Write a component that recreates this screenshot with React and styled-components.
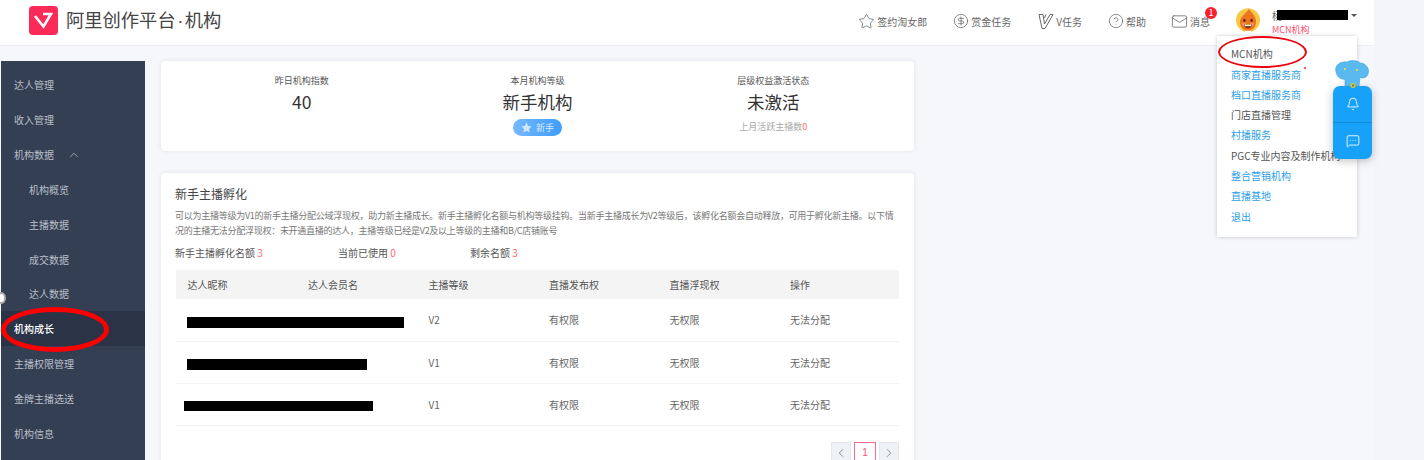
import styled, { createGlobalStyle } from "styled-components";
import { Star, CircleDollarSign, CircleHelp, Mail, Bell, MessageSquareMore, ChevronUp, ChevronLeft, ChevronRight } from "lucide-react";

const menuItems = [
    { label: "达人管理" },
    { label: "收入管理" },
    { label: "机构数据", open: true },
    { label: "机构概览", sub: true },
    { label: "主播数据", sub: true },
    { label: "成交数据", sub: true },
    { label: "达人数据", sub: true },
    { label: "机构成长", active: true },
    { label: "主播权限管理" },
    { label: "金牌主播选送" },
    { label: "机构信息" },
];

const dropItems = [
    { label: "MCN机构" },
    { label: "商家直播服务商", link: true },
    { label: "档口直播服务商", link: true },
    { label: "门店直播管理" },
    { label: "村播服务", link: true },
    { label: "PGC专业内容及制作机构" },
    { label: "整合营销机构", link: true },
    { label: "直播基地", link: true },
    { label: "退出", link: true },
];

const rows = [
    { level: "V2", left: 11, width: 217, top: 18, height: 11 },
    { level: "V1", left: 11, width: 180, top: 17, height: 11 },
    { level: "V1", left: 8, width: 189, top: 17, height: 10 },
];

function Logo(){
    return(
        <svg width="29" height="29" viewBox="0 0 29 29">
            <rect width="29" height="29" rx="4" fill="#fc2a56" />
            <path d="M6 10 L14.5 20.5 L22 8 L14 8" fill="none" stroke="#fff" strokeWidth="2.6" />
        </svg>
    );
}

function VIcon(){
    return(
        <svg width="16" height="17" viewBox="0 0 16 17" fill="none" stroke="#666" strokeWidth="1">
            <path d="M1 1.5 H5 L6.5 11 L12 1.5 H15 L7 15.5 H4 Z" />
            <path d="M8 1.5 L6.5 5" />
        </svg>
    );
}

function AvatarFace(){
    return(
        <svg width="30" height="33" viewBox="0 0 30 33">
            <circle cx="15" cy="15" r="15" fill="#f8c945" />
            <path d="M16 1 C18 5 25 8 25 17 C25 24 20 28 15 28 C10 28 5 24 5 17 C5 10 12 8 16 1 Z" fill="#ee7420" />
            <circle cx="10" cy="20" r="2.4" fill="#f2935a" />
            <circle cx="20" cy="20" r="2.4" fill="#f2935a" />
            <ellipse cx="10.5" cy="15" rx="1.5" ry="2" fill="#5b2507" />
            <ellipse cx="19.5" cy="15" rx="1.5" ry="2" fill="#5b2507" />
            <path d="M10 20.5 H20 Q19 25 15 25 Q11 25 10 20.5 Z" fill="#7a2c0a" />
            <rect x="11" y="20.5" width="8" height="1.8" fill="#fff" />
            <path d="M11 28 H19 L18 33 H12 Z" fill="#fff" />
        </svg>
    );
}

function Elephant(){
    return(
        <svg width="36" height="28" viewBox="0 0 36 28">
            <path d="M2 12 C0 5 7 1 13 2 C17 0 23 0 26 3 C32 3 36 9 34 14 C33 18 28 19 26 17 L25 26 L11 26 L11 19 C7 20 3 17 2 12 Z" fill="#5ab9ee" stroke="#3f9fd8" strokeWidth="0.6" />
            <circle cx="11" cy="9" r="1" fill="#f5e04a" />
            <circle cx="23" cy="10" r="1" fill="#f5e04a" />
            <circle cx="19" cy="25.5" r="2.5" fill="#e2c52a" />
            <circle cx="19" cy="25.5" r="1" fill="#3c6b8a" />
        </svg>
    );
}

function StarBadge(){
    return(
        <svg width="11" height="11" viewBox="0 0 24 24" fill="#cfe6ff">
            <path d="M12 1 L15.5 8.5 L23 9.5 L17.5 15 L19 23 L12 19 L5 23 L6.5 15 L1 9.5 L8.5 8.5 Z" />
        </svg>
    );
}

export default function App(){
    return(
        <>
            <GlobalStyle />
            <Page>
                <Header>
                    <Brand>
                        <Logo />
                        <BrandName>阿里创作平台<BrandDot>·</BrandDot>机构</BrandName>
                    </Brand>
                    <Nav>
                        <NavItem $gap={26}><Star size={17} strokeWidth={1} />签约淘女郎</NavItem>
                        <NavItem $gap={27}><CircleDollarSign size={16} strokeWidth={1} />赏金任务</NavItem>
                        <NavItem $gap={26}><VIcon />V任务</NavItem>
                        <NavItem $gap={25}><CircleHelp size={16} strokeWidth={1} />帮助</NavItem>
                        <NavItem $gap={26}>
                            <Mail size={17} strokeWidth={1} />消息
                            <Count>1</Count>
                        </NavItem>
                    </Nav>
                    <User>
                        <AvatarFace />
                        <UserText>
                            <UserName>杨<NameBar /><Caret /></UserName>
                            <UserRole>MCN机构</UserRole>
                        </UserText>
                        <Dropdown>
                            {dropItems.map((item) => (
                                <DropItem key={item.label} $link={item.link}>{item.label}</DropItem>
                            ))}
                            <MarkRing />
                            <RedDot />
                        </Dropdown>
                    </User>
                </Header>
                <Body>
                    <Sidebar>
                        {menuItems.map((item) => (
                            <MenuItem key={item.label} $sub={item.sub} $active={item.active}>
                                {item.label}
                                {item.open && <ChevronUp size={14} strokeWidth={1.3} />}
                                {item.active && <ActiveRing />}
                            </MenuItem>
                        ))}
                        <ScrollKnob />
                    </Sidebar>
                    <Main>
                        <SummaryCard>
                            <Stat>
                                <StatLabel>昨日机构指数</StatLabel>
                                <StatValue>40</StatValue>
                            </Stat>
                            <Stat>
                                <StatLabel>本月机构等级</StatLabel>
                                <StatValue>新手机构</StatValue>
                                <LevelBadge><StarBadge />新手</LevelBadge>
                            </Stat>
                            <Stat>
                                <StatLabel>层级权益激活状态</StatLabel>
                                <StatValue>未激活</StatValue>
                                <StatNote>上月活跃主播数<Red>0</Red></StatNote>
                            </Stat>
                        </SummaryCard>
                        <DetailCard>
                            <Title>新手主播孵化</Title>
                            <Desc>可以为主播等级为V1的新手主播分配公域浮现权，助力新主播成长。新手主播孵化名额与机构等级挂钩。当新手主播成长为V2等级后，该孵化名额会自动释放，可用于孵化新主播。以下情况的主播无法分配浮现权：未开通直播的达人，主播等级已经是V2及以上等级的主播和B/C店铺账号</Desc>
                            <Quota>
                                <QuotaItem $width={163}>新手主播孵化名额 <Red>3</Red></QuotaItem>
                                <QuotaItem $width={132}>当前已使用 <Red>0</Red></QuotaItem>
                                <QuotaItem>剩余名额 <Red>3</Red></QuotaItem>
                            </Quota>
                            <Table>
                                <thead>
                                    <tr>
                                        <HeadCell>达人昵称</HeadCell>
                                        <HeadCell>达人会员名</HeadCell>
                                        <HeadCell>主播等级</HeadCell>
                                        <HeadCell>直播发布权</HeadCell>
                                        <HeadCell>直播浮现权</HeadCell>
                                        <HeadCell>操作</HeadCell>
                                    </tr>
                                </thead>
                                <tbody>
                                    {rows.map((row, i) => (
                                        <tr key={i}>
                                            <Cell>
                                                <Redact $left={row.left} $width={row.width} $top={row.top} $height={row.height} />
                                            </Cell>
                                            <Cell />
                                            <Cell>{row.level}</Cell>
                                            <Cell>有权限</Cell>
                                            <Cell>无权限</Cell>
                                            <Cell>无法分配</Cell>
                                        </tr>
                                    ))}
                                </tbody>
                            </Table>
                            <Pager>
                                <PageBtn><ChevronLeft size={14} strokeWidth={1.2} /></PageBtn>
                                <PageBtn $current>1</PageBtn>
                                <PageBtn><ChevronRight size={14} strokeWidth={1.2} /></PageBtn>
                            </Pager>
                        </DetailCard>
                    </Main>
                </Body>
                <Float>
                    <Mascot><Elephant /></Mascot>
                    <FloatBtn><Bell size={14} strokeWidth={1.5} /></FloatBtn>
                    <FloatBtn><MessageSquareMore size={14} strokeWidth={1.5} /></FloatBtn>
                </Float>
            </Page>
        </>
    );
}

const GlobalStyle = createGlobalStyle`
    html, body{
        margin: 0;
        padding: 0;
        background-color: #f4f5f8;
    }
    *{
        box-sizing: border-box;
    }
`

const Page = styled.div`
    position: relative;
    width: 1424px;
    height: 460px;
    overflow: hidden;
    background-color: #f4f5f8;
    font-family: "Noto Sans CJK SC", "Liberation Sans", sans-serif;
    font-size: 10px;
    color: #666;
`

const Header = styled.header`
    width: 1374px;
    height: 46px;
    padding: 0 17px 0 29px;
    display: flex;
    align-items: center;
    background-color: #fff;
    border-bottom: 1px solid #eceef3;
`

const Brand = styled.div`
    display: flex;
    align-items: center;
    gap: 8px;
    margin-top: -5px;
`

const BrandName = styled.span`
    font-size: 18.3px;
    line-height: 24px;
    color: #444;
`

const BrandDot = styled.span`
    margin: 0 1.5px;
    font-family: "Liberation Sans", sans-serif;
`

const Nav = styled.nav`
    display: flex;
    align-items: center;
    margin-left: auto;
    margin-top: -3px;
`

const NavItem = styled.div`
    position: relative;
    display: flex;
    align-items: center;
    gap: 2px;
    margin-right: ${(p) => p.$gap}px;
    color: #666;
    white-space: nowrap;

    svg{
        color: #555;
    }
`

const Count = styled.span`
    position: absolute;
    top: -6px;
    right: -7px;
    width: 12px;
    height: 12px;
    border-radius: 50%;
    background-color: #f5222d;
    color: #fff;
    font-size: 9px;
    line-height: 12px;
    text-align: center;
`

const User = styled.div`
    position: relative;
    width: 121px;
    flex-shrink: 0;
    display: flex;
    align-items: center;
    gap: 8px;
    margin-top: -3px;
`

const UserText = styled.div`
    display: flex;
    flex-direction: column;
    gap: 3px;
    margin: 2px 0 0 4px;
`

const UserName = styled.div`
    position: relative;
    display: flex;
    align-items: center;
    gap: 3px;
    height: 11px;
    font-size: 10px;
    line-height: 11px;
    color: #666;
`

const NameBar = styled.span`
    display: block;
    width: 71px;
    height: 10px;
    margin-left: -8px;
    background-color: #000;
`

const Caret = styled.span`
    width: 0;
    height: 0;
    border-left: 3px solid transparent;
    border-right: 3px solid transparent;
    border-top: 3px solid #555;
`

const UserRole = styled.span`
    font-size: 9px;
    line-height: 11px;
    color: #ff4d6d;
`

const Dropdown = styled.div`
    position: absolute;
    top: 31px;
    left: -19px;
    width: 140px;
    height: 201px;
    padding: 8.8px 0 0 14px;
    display: flex;
    flex-direction: column;
    background-color: #fff;
    box-shadow: 0 0 4px rgba(0, 0, 0, 0.2);
    z-index: 5;
`

const DropItem = styled.div`
    height: 20.3px;
    line-height: 20px;
    white-space: nowrap;
    color: ${(p) => (p.$link ? "#2a9ee8" : "#555")};
`

const MarkRing = styled.span`
    position: absolute;
    top: 0;
    left: 1px;
    width: 89px;
    height: 32px;
    border: 2px solid #e8060c;
    border-radius: 50%;
`

const RedDot = styled.span`
    position: absolute;
    top: 31px;
    left: 87px;
    width: 2px;
    height: 2px;
    border-radius: 50%;
    background-color: #f5222d;
`

const Body = styled.div`
    width: 1374px;
    height: 414px;
    display: flex;
    align-items: flex-start;
    padding: 15px 0 0 1px;
    background-color: #f6f7fb;
`

const Sidebar = styled.aside`
    position: relative;
    width: 144px;
    height: 400px;
    padding-top: 6.5px;
    flex-shrink: 0;
    background-color: #353f53;
`

const MenuItem = styled.div`
    position: relative;
    height: 34.85px;
    padding-left: ${(p) => (p.$sub ? 28 : 13)}px;
    display: flex;
    align-items: center;
    gap: 13px;
    color: ${(p) => (p.$active ? "#fff" : "#b9bfca")};
    font-weight: ${(p) => (p.$active ? 500 : 400)};
    background-color: ${(p) => (p.$active ? "#2b3446" : "transparent")};
`

const ActiveRing = styled.span`
    position: absolute;
    top: -4px;
    left: 0;
    width: 108px;
    height: 45px;
    border: 5px solid #f00;
    border-radius: 50%;
`

const ScrollKnob = styled.span`
    position: absolute;
    top: 231px;
    left: -4px;
    width: 9px;
    height: 12px;
    border-radius: 50%;
    border: 2px solid #aaa;
    background-color: #fff;
`

const Main = styled.main`
    width: 753px;
    margin-left: 16px;
    display: flex;
    flex-direction: column;
    gap: 22px;
`

const Card = styled.section`
    background-color: #fff;
    border-radius: 4px;
    box-shadow: 0 0 4px rgba(40, 50, 80, 0.1);
`

const SummaryCard = styled(Card)`
    height: 90px;
    padding: 14px 23px 0;
    display: grid;
    grid-template-columns: repeat(3, 1fr);
`

const Stat = styled.div`
    display: flex;
    flex-direction: column;
    align-items: center;
`

const StatLabel = styled.div`
    font-size: 9px;
    line-height: 12px;
    color: #555;
`

const StatValue = styled.div`
    margin-top: 2px;
    font-size: 17.5px;
    line-height: 26px;
    color: #333;
`

const LevelBadge = styled.div`
    margin-top: 4px;
    width: 49px;
    height: 17px;
    display: flex;
    align-items: center;
    justify-content: center;
    gap: 4px;
    border-radius: 9px;
    font-size: 9px;
    color: #d8eaff;
    background: linear-gradient(90deg, #76b8fb, #3f9dfd);
`

const StatNote = styled.div`
    margin-top: 6px;
    font-size: 9px;
    line-height: 12px;
    color: #aaa;
`

const Red = styled.span`
    color: #ff6b6b;
`

const DetailCard = styled(Card)`
    height: 300px;
    padding: 12px 15px 0 14px;
`

const Title = styled.h2`
    margin: 0;
    font-size: 12px;
    font-weight: 400;
    line-height: 17px;
    color: #444;
`

const Desc = styled.p`
    margin: 6px 0 0;
    width: 722px;
    font-size: 9px;
    line-height: 15px;
    letter-spacing: -0.26px;
    color: #777;
`

const Quota = styled.div`
    display: flex;
    margin-top: 7px;
    line-height: 15px;
    color: #555;
`

const QuotaItem = styled.div`
    width: ${(p) => (p.$width ? p.$width + "px" : "auto")};
`

const Table = styled.table`
    width: 723px;
    margin: 10px 0 0 1px;
    table-layout: fixed;
    border-collapse: collapse;
`

const HeadCell = styled.th`
    height: 29px;
    padding: 0 0 0 11.6px;
    text-align: left;
    font-weight: 400;
    color: #555;
    background-color: #f4f4f4;
`

const Cell = styled.td`
    position: relative;
    height: 42px;
    padding: 0 0 0 11.6px;
    color: #666;
    border-bottom: 1px solid #f3f3f3;
`

const Redact = styled.span`
    position: absolute;
    top: ${(p) => p.$top}px;
    left: ${(p) => p.$left}px;
    width: ${(p) => p.$width}px;
    height: ${(p) => p.$height}px;
    background-color: #000;
    z-index: 1;
`

const Pager = styled.div`
    display: flex;
    justify-content: flex-end;
    gap: 3px;
    margin-top: 16px;
    width: 724px;
`

const PageBtn = styled.div`
    width: ${(p) => (p.$current ? 22 : 20)}px;
    height: 22px;
    display: flex;
    align-items: center;
    justify-content: center;
    line-height: 12px;
    font-family: "Liberation Sans", sans-serif;
    color: ${(p) => (p.$current ? "#ff4d6d" : "#666")};
    background-color: ${(p) => (p.$current ? "#fff" : "#eef1f5")};
    border: 1px solid ${(p) => (p.$current ? "#ff6b88" : "#e3e6ea")};
`

const Float = styled.div`
    position: absolute;
    top: 86px;
    left: 1333px;
    width: 39px;
    height: 73px;
    display: flex;
    flex-direction: column;
    border-radius: 7px;
    background-color: #17a1f9;
    box-shadow: 0 2px 8px rgba(0, 0, 0, 0.25);
    z-index: 6;
`

const Mascot = styled.div`
    position: absolute;
    top: -26px;
    left: 1px;
    line-height: 0;
`

const FloatBtn = styled.div`
    flex: 1;
    display: flex;
    align-items: center;
    justify-content: center;
    color: #fff;

    & + &{
        border-top: 1px solid #128ad8;
    }
`
